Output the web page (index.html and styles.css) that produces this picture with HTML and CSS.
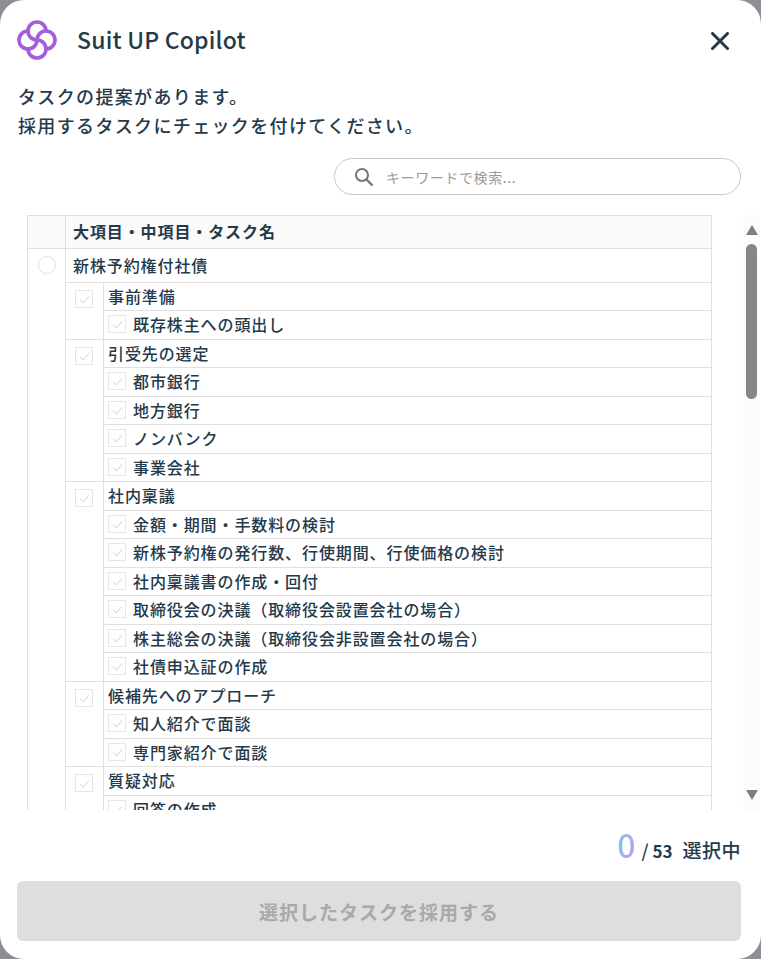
FILE: index.html
```html
<!DOCTYPE html>
<html lang="ja">
<head>
<meta charset="utf-8">
<title>Suit UP Copilot</title>
<link rel="stylesheet" href="styles.css">
</head>
<body>
<div class="panel">
  <header class="head">
    <svg class="logo" viewBox="0 0 40 40" fill="none" stroke="#a35ddd" stroke-width="3.6" stroke-linecap="round">
      <path d="M20 20A9 9 0 1 1 29 11"/>
      <path d="M20 20A9 9 0 1 1 29 29"/>
      <path d="M20 20A9 9 0 1 1 11 29"/>
      <path d="M20 20A9 9 0 1 1 11 11"/>
    </svg>
    <h1 class="title">Suit UP Copilot</h1>
    <svg class="close" viewBox="0 0 18 18" fill="none" stroke="#24394a" stroke-width="3" stroke-linecap="round"><path d="M1.5 1.5 16.5 16.5M16.5 1.5 1.5 16.5"/></svg>
  </header>
  <p class="lead">タスクの提案があります。<br>採用するタスクにチェックを付けてください。</p>
  <div class="search-row">
    <div class="search">
      <svg class="search-icon" viewBox="0 0 20 20" fill="none" stroke="#757575" stroke-width="2"><circle cx="8" cy="8" r="6"/><path d="m12.5 12.5 6 6" stroke-width="2.4"/></svg>
      <span class="placeholder">キーワードで検索...</span>
    </div>
  </div>
  <div class="list-wrap">
    <div class="list">
      <div class="thead"><div class="c1"></div><div class="th">大項目・中項目・タスク名</div></div>
      <div class="major">
        <div class="c1 c1-body"><span class="radio"></span></div>
        <div class="majorbody">
          <div class="major-name">新株予約権付社債</div>
          <div class="group">
            <div class="c2"><span class="cb"></span></div>
            <div class="rows">
              <div class="row mid">事前準備</div>
              <div class="row task"><span class="cb"></span>既存株主への頭出し</div>
            </div>
          </div>
          <div class="group">
            <div class="c2"><span class="cb"></span></div>
            <div class="rows">
              <div class="row mid">引受先の選定</div>
              <div class="row task"><span class="cb"></span>都市銀行</div>
              <div class="row task"><span class="cb"></span>地方銀行</div>
              <div class="row task"><span class="cb"></span>ノンバンク</div>
              <div class="row task"><span class="cb"></span>事業会社</div>
            </div>
          </div>
          <div class="group">
            <div class="c2"><span class="cb"></span></div>
            <div class="rows">
              <div class="row mid">社内稟議</div>
              <div class="row task"><span class="cb"></span>金額・期間・手数料の検討</div>
              <div class="row task"><span class="cb"></span>新株予約権の発行数、行使期間、行使価格の検討</div>
              <div class="row task"><span class="cb"></span>社内稟議書の作成・回付</div>
              <div class="row task"><span class="cb"></span>取締役会の決議（取締役会設置会社の場合）</div>
              <div class="row task"><span class="cb"></span>株主総会の決議（取締役会非設置会社の場合）</div>
              <div class="row task"><span class="cb"></span>社債申込証の作成</div>
            </div>
          </div>
          <div class="group">
            <div class="c2"><span class="cb"></span></div>
            <div class="rows">
              <div class="row mid">候補先へのアプローチ</div>
              <div class="row task"><span class="cb"></span>知人紹介で面談</div>
              <div class="row task"><span class="cb"></span>専門家紹介で面談</div>
            </div>
          </div>
          <div class="group">
            <div class="c2"><span class="cb"></span></div>
            <div class="rows">
              <div class="row mid">質疑対応</div>
              <div class="row task"><span class="cb"></span>回答の作成</div>
            </div>
          </div>
        </div>
      </div>
    </div>
    <div class="scrollbar">
      <span class="arrow up"></span>
      <div class="track"><span class="thumb"></span></div>
      <span class="arrow down"></span>
    </div>
  </div>
  <div class="count"><span class="zero">0</span><span class="slash">/</span><span class="total">53</span><span class="sel">選択中</span></div>
  <button class="submit" type="button">選択したタスクを採用する</button>
</div>
</body>
</html>
```
FILE: styles.css
```css
* { box-sizing: border-box; }
html, body { margin: 0; height: 100%; }
body {
  background: #8d8f94;
  font-family: "Noto Sans CJK JP", "Noto Sans", sans-serif;
  color: #24394a;
  overflow: hidden;
}
.panel {
  width: 761px;
  height: 959px;
  background: #fff;
  border-radius: 24px;
  display: flex;
  flex-direction: column;
}
.head {
  display: flex;
  align-items: center;
  height: 40px;
  margin: 20px 32px 0 17px;
}
.logo { width: 40px; height: 40px; flex: none; }
.title {
  margin: -2px 0 0 20px;
  font-size: 23px;
  font-weight: 500;
  flex: 1;
  letter-spacing: 0.2px;
}
.close { width: 18px; height: 18px; flex: none; margin-top: 2px; }
.lead {
  margin: 22px 0 0 18px;
  font-size: 18px;
  line-height: 29px;
  letter-spacing: 1.35px;
  font-weight: 500;
}
.search-row { display: flex; justify-content: flex-end; margin: 18px 20px 0 0; }
.search {
  width: 407px;
  height: 37px;
  border: 1px solid #c8c8c8;
  border-radius: 19px;
  display: flex;
  align-items: center;
  padding-left: 19px;
}
.search-icon { width: 20px; height: 20px; flex: none; }
.placeholder { margin-left: 12px; font-size: 14px; color: #9b9b9b; letter-spacing: 0.6px; }
.list-wrap {
  display: flex;
  margin-top: 20px;
  height: 595px;
  overflow: hidden;
}
.list { width: 685px; margin-left: 27px; flex: none; border: solid #e0e0e0; border-width: 1px 1px 0 1px; }
.thead { display: flex; height: 33px; background: #fafafa; border-bottom: 1px solid #e0e0e0; }
.c1 { width: 38px; flex: none; border-right: 1px solid #e0e0e0; }
.c1-body { display: flex; justify-content: center; align-items: flex-start; padding-top: 8px; }
.th { padding-left: 7px; font-size: 16px; font-weight: 700; letter-spacing: 0.9px; line-height: 30px; }
.major { display: flex; }
.majorbody { flex: 1; min-width: 0; }
.major-name {
  height: 33.5px;
  padding-left: 7px;
  font-size: 16px;
  font-weight: 500;
  letter-spacing: 0.9px;
  line-height: 32px;
  border-bottom: 1px solid #e0e0e0;
}
.radio { width: 18px; height: 18px; margin-top: -1px; border-radius: 50%; border: 1px solid #e0e0e0; }
.group { display: flex; border-bottom: 1px solid #e0e0e0; }
.c2 { width: 38px; flex: none; border-right: 1px solid #e0e0e0; padding: 7px 0 0 9px; }
.c2 .cb { display: block; }
.rows { flex: 1; min-width: 0; }
.row {
  height: 28.5px;
  padding-left: 4px;
  padding-bottom: 1px;
  font-size: 16px;
  font-weight: 500;
  letter-spacing: 0.9px;
  white-space: nowrap;
  display: flex;
  align-items: center;
  border-bottom: 1px solid #e0e0e0;
}
.row:last-child { height: 27.5px; border-bottom: 0; }
.cb {
  width: 18px;
  height: 18px;
  flex: none;
  border: 1px solid #e6e6e6;
  position: relative;
}
.cb::after {
  content: "";
  position: absolute;
  left: 5.5px;
  top: 3px;
  width: 4px;
  height: 8px;
  border: solid #d9d9d9;
  border-width: 0 1px 1px 0;
  transform: rotate(40deg);
}
.task .cb { margin-right: 7px; }
.scrollbar { width: 17px; margin-left: 31px; display: flex; flex-direction: column; align-items: center; flex: none; background: #fcfcfc; }
.arrow { width: 0; height: 0; border-left: 6.5px solid transparent; border-right: 6.5px solid transparent; flex: none; }
.arrow.up { border-bottom: 10px solid #7f7f7f; margin-top: 10px; }
.arrow.down { border-top: 10px solid #7f7f7f; margin-bottom: 10px; }
.track { flex: 1; padding-top: 9px; width: 100%; display: flex; justify-content: center; }
.thumb { width: 11px; height: 155px; background: #868686; border-radius: 6px; }
.count {
  display: flex;
  justify-content: flex-end;
  align-items: baseline;
  margin: 11px 20px 0 0;
  height: 40px;
  font-size: 19px;
}
.zero {
  font-size: 32px;
  font-weight: 500;
  background: linear-gradient(90deg, #86c3f2, #b9a2ec);
  -webkit-background-clip: text;
  background-clip: text;
  color: transparent;
}
.slash { margin-left: 6px; font-weight: 500; font-size: 18px; }
.total { margin-left: 4px; font-weight: 700; font-size: 17px; }
.sel { margin-left: 10px; font-weight: 500; letter-spacing: 0.5px; }
.submit {
  margin: 20px 20px 0 17px;
  height: 60px;
  border: 0;
  border-radius: 6px;
  background: #dedede;
  color: #a9a9a9;
  font: 700 19px "Noto Sans CJK JP", sans-serif;
  letter-spacing: 1px;
}
```
